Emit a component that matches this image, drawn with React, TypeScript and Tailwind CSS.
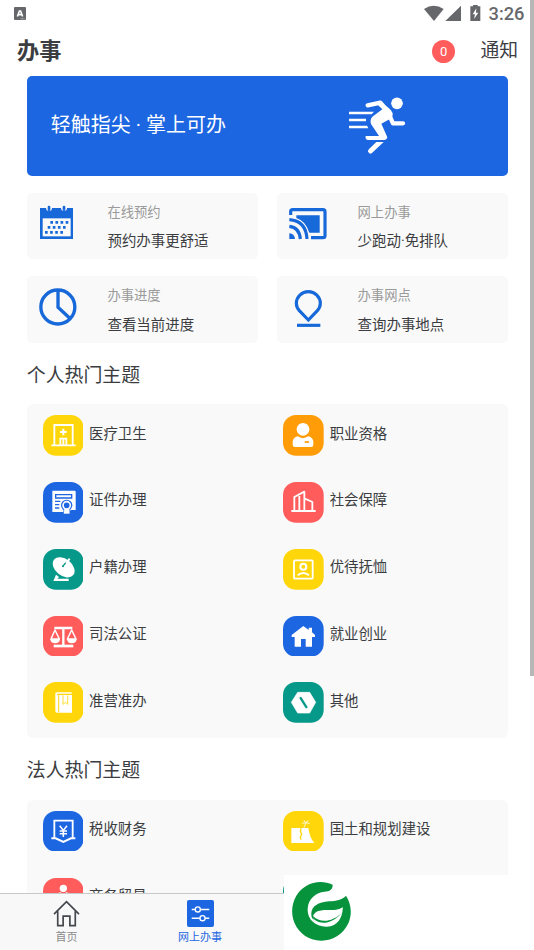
import React from 'react';

type Item = { label: string; color: string; icon: React.ReactNode };
type Service = { title: string; text: string; icon: React.ReactNode };

const line = { fill: 'none', stroke: 'currentColor', strokeWidth: 5.5 } as const;

const personal: Item[] = [
  {
    label: '医疗卫生',
    color: 'text-[#ffd60a]',
    icon: (
      <g {...line}>
        <path d="M34 90V30H89V90M25 91H98M52 90V71H70V90M61 71V90" />
        <path d="M61 41V61M51 51H71" strokeWidth="6" />
      </g>
    ),
  },
  {
    label: '职业资格',
    color: 'text-[#ff9c08]',
    icon: (
      <g fill="currentColor">
        <circle cx="60" cy="43" r="19" />
        <path d="M44 64Q60 75 76 64Q91 68 91 82V89Q91 96 84 96H36Q29 96 29 89V82Q29 68 44 64Z" />
        <path d="M65 81H78" stroke="#ff9c08" strokeWidth="5" />
      </g>
    ),
  },
  {
    label: '证件办理',
    color: 'text-[#1d66e2]',
    icon: (
      <g>
        <path d="M28 26H95Q98 26 98 29V84H86L68 90L60 90H28Z" fill="currentColor" />
        <path d="M38 38H86V48H38Z" fill="none" stroke="#1d66e2" strokeWidth="4" />
        <path d="M36 58H52M36 68H49M36 78H49" stroke="#1d66e2" strokeWidth="4" />
        <circle cx="71" cy="70" r="17" fill="#1d66e2" />
        <path d="M63 78L61 96H81L80 78Z" fill="currentColor" stroke="#1d66e2" strokeWidth="2" />
        <circle cx="71" cy="70" r="11" fill="#1d66e2" stroke="white" strokeWidth="5" />
      </g>
    ),
  },
  {
    label: '社会保障',
    color: 'text-[#ff5c5b]',
    icon: (
      <g {...line} strokeLinejoin="round">
        <path d="M25 87H98M34 86V45L64 29V86M64 49L88 60V86M49 42V86" />
      </g>
    ),
  },
  {
    label: '户籍办理',
    color: 'text-[#069889]',
    icon: (
      <g>
        <ellipse cx="62" cy="55" rx="37" ry="25" transform="rotate(39 62 55)" fill="currentColor" />
        <path d="M60 51L71 38" stroke="#069889" strokeWidth="4" />
        <path d="M69 43L80 29" stroke="currentColor" strokeWidth="6" />
        <circle cx="60" cy="52" r="3" fill="#069889" />
        <path d="M39 77L48 84L43 89H77V96H31Z" fill="currentColor" />
      </g>
    ),
  },
  {
    label: '优待抚恤',
    color: 'text-[#ffd60a]',
    icon: (
      <g {...line}>
        <rect x="33" y="34" width="56" height="55" rx="3" />
        <circle cx="61" cy="53" r="9" strokeWidth="6" />
        <path d="M44 79Q61 65 78 79" strokeWidth="6" />
      </g>
    ),
  },
  {
    label: '司法公证',
    color: 'text-[#ff5c5b]',
    icon: (
      <g fill="none" stroke="currentColor" strokeWidth="4.5" strokeLinejoin="round">
        <path d="M34 36H88M61 32V89" strokeWidth="7" />
        <path d="M32 90H91" strokeWidth="8" />
        <path d="M36 42L24 69H49ZM86 42L73 69H99Z" />
        <path d="M22 69H51Q50 82 36 82Q23 82 22 69ZM72 69H101Q100 82 86 82Q73 82 72 69Z" fill="currentColor" stroke="none" />
      </g>
    ),
  },
  {
    label: '就业创业',
    color: 'text-[#1d66e2]',
    icon: (
      <path d="M26 57L61 30L77 42V35H87V49L96 57V63H87V92H68V69H54V92H35V63H26Z" fill="currentColor" />
    ),
  },
  {
    label: '准营准办',
    color: 'text-[#ffd60a]',
    icon: (
      <g>
        <path d="M37 35Q37 31 42 31H86V35H42V39H87V92H42Q37 92 37 87Z" fill="currentColor" />
        <path d="M47 40V91" stroke="#ffd60a" strokeWidth="3" />
        <path d="M60 40V67L67 61L74 67V40" fill="none" stroke="#ffd60a" strokeWidth="2.5" />
      </g>
    ),
  },
  {
    label: '其他',
    color: 'text-[#069889]',
    icon: (
      <g>
        <path d="M44 31H80L98 61L80 93H44L25 61Z" fill="currentColor" strokeLinejoin="round" stroke="currentColor" strokeWidth="2" />
        <path d="M53 48L70 75" stroke="#069889" strokeWidth="7" strokeLinecap="round" />
      </g>
    ),
  },
];

const corporate: Item[] = [
  {
    label: '税收财务',
    color: 'text-[#1d66e2]',
    icon: (
      <g {...line}>
        <path d="M34 80V29H89V80" />
        <path d="M25 82H38L61 93L84 82H97" strokeWidth="6" />
        <path d="M50 44L61 58L72 44M61 58V78M50 60H72M50 68H72" strokeWidth="4.5" />
      </g>
    ),
  },
  {
    label: '国土和规划建设',
    color: 'text-[#ffd60a]',
    icon: (
      <g>
        <path d="M25 51H76Q81 83 94 96H25Z" fill="currentColor" />
        <path d="M54 51L52 61L56 69L52 78L54 86" fill="none" stroke="#ffd60a" strokeWidth="4" />
        <path d="M63 50L69 35M69 35L57 37M69 35L62 28M69 35L76 29M69 35L80 38" fill="none" stroke="currentColor" strokeOpacity=".75" strokeWidth="3" />
      </g>
    ),
  },
  {
    label: '商务贸易',
    color: 'text-[#ff5c5b]',
    icon: (
      <g fill="currentColor">
        <circle cx="61" cy="31" r="11" />
        <path d="M45 58V49Q45 43 52 43L61 48L70 43Q77 43 77 49V90H45Z" />
      </g>
    ),
  },
  { label: '其他', color: 'text-[#069889]', icon: <circle cx="61" cy="61" r="28" fill="currentColor" /> },
];

const services: Service[] = [
  {
    title: '在线预约',
    text: '预约办事更舒适',
    icon: (
      <g>
        <path d="M3 9H102V102H3Z" fill="currentColor" />
        <path d="M11 40H95V94H11Z" fill="#f9f9f9" />
        <path d="M34 52H88M26 67H80M18 82H72" stroke="currentColor" strokeWidth="8" strokeDasharray="8 7.3" />
        <circle cx="30" cy="9" r="9" fill="#f9f9f9" />
        <circle cx="75" cy="9" r="9" fill="#f9f9f9" />
        <path d="M30 6V14M75 6V14" stroke="currentColor" strokeWidth="8" strokeLinecap="round" />
      </g>
    ),
  },
  {
    title: '网上办事',
    text: '少跑动·免排队',
    icon: (
      <g fill="none" stroke="currentColor" strokeWidth="9.5">
        <path d="M5 30V20Q5 14 11 14H102Q108 14 108 20V92Q108 98 102 98H66" />
        <path d="M22 31H92V83H61Q50 48 22 39Z" fill="currentColor" stroke="none" />
        <path d="M1 44Q51 48 54 102M1 64Q31 67 34 102" />
        <path d="M1 85Q17 87 18 102H1Z" fill="currentColor" stroke="none" />
      </g>
    ),
  },
  {
    title: '办事进度',
    text: '查看当前进度',
    icon: (
      <g fill="none" stroke="currentColor" strokeWidth="10">
        <circle cx="56.5" cy="57" r="51" />
        <path d="M57 5V58L94 92" />
      </g>
    ),
  },
  {
    title: '办事网点',
    text: '查询办事地点',
    icon: (
      <g fill="none" stroke="currentColor" strokeWidth="9.5">
        <path d="M58 96L31 68Q22 58 22 46A36 35 0 0 1 94 46Q94 58 85 68Z" />
        <path d="M24 112H94" />
      </g>
    ),
  },
];

function TopicGrid({ items }: { items: Item[] }) {
  return (
    <div className="grid grid-cols-2 rounded-md bg-[#f9f9f9]">
      {items.map((item) => (
        <div key={item.label} className="flex h-[66.8px] items-start gap-[5.6px] pl-4 pt-[11px]">
          <svg viewBox="0 0 122 122" className={`h-[40.7px] w-[40.7px] shrink-0 ${item.color}`}>
            <rect width="122" height="122" rx="39" fill="currentColor" />
            <g className="text-white">{item.icon}</g>
          </svg>
          <span className="pt-[9.4px] text-[14.4px] leading-[20px]">{item.label}</span>
        </div>
      ))}
    </div>
  );
}

function StatusBar() {
  return (
    <div className="flex h-[27px] items-center justify-between pl-[14px] pr-[9.5px] text-[#66676b]">
      <svg viewBox="0 0 12 13" className="h-[13px] w-[12px]">
        <rect width="12" height="13" rx="1" fill="currentColor" />
        <path d="M3.4 9.5L5.4 4H6.6L8.6 9.5M4.4 7.6H7.6" fill="none" stroke="white" strokeWidth="1.6" />
        <path d="M6.5 11.8H10.5" stroke="white" strokeWidth=".6" strokeDasharray="1 .5" />
      </svg>
      <div className="flex items-center">
        <svg viewBox="0 0 174 50" className="mr-[6.5px] h-[16.7px] w-[58px]">
          <path d="M0 12Q29-8 59 12L30 48Z" fill="currentColor" />
          <path d="M64 48L111 2V48Z" fill="currentColor" />
          <path d="M139 4H147V0H161V4H169V48H139Z" fill="currentColor" />
          <path d="M157 10L146 28H153L150 42L163 23H156Z" fill="white" />
        </svg>
        <span className="pt-[2px] font-[Roboto] text-[18.3px] font-medium leading-none">3:26</span>
      </div>
    </div>
  );
}

export default function App() {
  return (
    <div className="relative h-[950px] w-[534px] overflow-hidden bg-white font-['Roboto','Noto_Sans_CJK_SC',sans-serif] text-[#3b3d41]">
      <StatusBar />
      <header className="flex h-[48.5px] items-center justify-between pl-[17px] pr-[16px]">
        <h1 className="text-[22.2px] font-bold leading-[30px]">办事</h1>
        <div className="flex items-center gap-[25.5px]">
          <span className="flex h-[22.5px] w-[22.5px] items-center justify-center rounded-full bg-[#ff5c5b] text-[13px] text-white">0</span>
          <span className="text-[18.8px] leading-[26px]">通知</span>
        </div>
      </header>

      <main className="pl-[26.8px] pr-[26px]">
        <section className="flex h-[100.3px] items-center justify-between rounded-[5px] bg-[#1d66e2] pl-[24px] pr-[102.5px] text-white">
          <span className="pb-[2px] text-[20px]">轻触指尖 · 掌上可办</span>
          <svg viewBox="0 0 170 172" className="h-[57.3px] w-[56.7px]">
            <g transform="translate(0 3)" fill="none" stroke="white" strokeLinejoin="round">
              <circle cx="144" cy="16" r="17.5" fill="white" stroke="none" />
              <path d="M0 41H75L68 49H0ZM0 62H51V70H0ZM0 83H54L58 91H0Z" fill="white" stroke="none" />
              <path d="M56 22L94 14L116 40L132 76H162" strokeWidth="13" strokeLinecap="round" />
              <path d="M92 8L118 29Q138 44 128 60L97 77L115 118Q114 126 107 126H56Q48 124 50 114H90L66 78Q62 65 70 56L100 34L86 20Z" fill="white" stroke="none" />
              <path d="M82 132H104L68 166Q60 170 57 160Q57 157 60 153Z" fill="white" stroke="none" />
            </g>
          </svg>
        </section>

        <section className="mt-[17px] grid grid-cols-2 gap-x-[19px] gap-y-[17px]">
          {services.map((service) => (
            <div key={service.title} className="flex h-[66.5px] gap-[31px] rounded-[5px] bg-[#f9f9f9] pl-[12px]">
              <svg viewBox="0 0 113 120" className="mt-[12px] h-[40px] w-[37.7px] shrink-0 overflow-visible text-[#1768d8]">
                {service.icon}
              </svg>
              <div className="pt-[10px]">
                <p className="text-[13.3px] leading-[20px] text-[#9a9a9a]">{service.title}</p>
                <p className="mt-[9.4px] text-[14.45px] leading-[20px]">{service.text}</p>
              </div>
            </div>
          ))}
        </section>

        <h2 className="flex h-[61.5px] items-center pt-[4.5px] text-[18.9px]">个人热门主题</h2>
        <TopicGrid items={personal} />
        <h2 className="flex h-[61.5px] items-center pt-[4px] text-[18.9px]">法人热门主题</h2>
        <TopicGrid items={corporate} />
      </main>

      <nav className="absolute bottom-0 left-0 flex h-[57px] w-full border-t-[1.5px] border-[#c8c8c8] bg-[#f8f8f8] text-[11px] leading-[16px]">
        <div className="flex w-[133px] flex-col items-center pt-[6px] text-[#8b8b8b]">
          <svg viewBox="0 0 80 80" className="h-[27px] w-[27px] text-[#44484d]">
            <path d="M3 42L40 5L77 42M14 33V76H30V48H50V76H66V33" fill="none" stroke="currentColor" strokeWidth="5" />
          </svg>
          <span className="mt-[2.5px]">首页</span>
        </div>
        <div className="flex w-[134px] flex-col items-center pt-[5.5px] text-[#1d66e2]">
          <svg viewBox="0 0 80 80" className="h-[27px] w-[27px]">
            <rect width="80" height="80" rx="6" fill="currentColor" />
            <g fill="none" stroke="white" strokeWidth="4">
              <path d="M14 28H24M40 28H66M14 54H38M54 54H66" />
              <circle cx="32" cy="28" r="7.5" />
              <circle cx="46" cy="54" r="7.5" />
            </g>
          </svg>
          <span className="mt-[3px]">网上办事</span>
        </div>
      </nav>

      <div className="absolute bottom-0 right-0 h-[75px] w-[250px] bg-white pl-[7.5px] pt-[7px]">
        <svg viewBox="0 0 177 177" className="h-[59px] w-[59px]">
          <path
            d="M122 8C80-11 34 6 13 41C-14 88 4 145 51 168C98 189 149 168 169 124C181 96 178 66 162 41C151 53 132 57 112 58C78 60 59 73 58 94C57 104 61 111 68 119C65 105 76 88 94 85C115 83 137 87 152 76C153 103 139 133 104 134C70 135 45 112 47 80C49 48 73 32 97 29C113 28 122 23 122 8Z"
            fill="#06933c"
          />
          <path d="M68 119C58 108 63 94 77 88C101 80 136 92 152 76C147 109 111 135 68 119Z" fill="white" />
          <path d="M59 103C69 124 111 137 149 93C119 122 83 123 62 101Z" fill="#06933c" />
        </svg>
      </div>
      <div className="absolute right-0 top-0 h-[676px] w-[4px] bg-[#b7b7b7]" />
    </div>
  );
}
